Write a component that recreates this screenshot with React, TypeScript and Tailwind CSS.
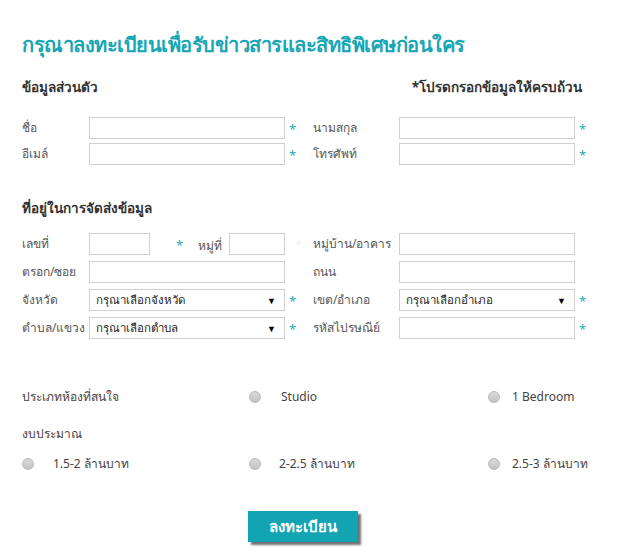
import React from 'react';

const Star = ({ hidden = false }: { hidden?: boolean }) => (
  <span className={`text-[13px] leading-none ${hidden ? 'text-gray-100' : 'text-[#29aab8]'}`}>*</span>
);

const Field = ({ w = 'w-full', select, placeholder }: { w?: string; select?: boolean; placeholder?: string }) => (
  <div className={`${w} h-[22px] border border-[#cfcfcf] bg-white flex items-center px-1.5 text-[11.5px] leading-none text-[#222]`}>
    {select && (
      <>
        <span className="flex-1 whitespace-nowrap">{placeholder}</span>
        <span className="text-[9px] text-black mr-0.5">▼</span>
      </>
    )}
  </div>
);

const Radio = () => (
  <span className="inline-block w-[12px] h-[12px] rounded-full border border-[#b9b9b9] bg-gradient-to-b from-[#d9d9d9] to-[#c4c4c4]" />
);

const Label = ({ children }: { children: React.ReactNode }) => (
  <span className="text-[12px] leading-none whitespace-nowrap text-[#555]">{children}</span>
);

const App: React.FC = () => {
  return (
    <div className="w-[624px] h-[558px] bg-white font-['Noto_Sans','Liberation_Sans',sans-serif] px-[22px] pt-[30px]">
      <h1 className="text-[20px] font-bold text-[#17a6b5] leading-[30px] tracking-tight whitespace-nowrap">
        กรุณาลงทะเบียนเพื่อรับข่าวสารและสิทธิพิเศษก่อนใคร
      </h1>

      <div className="mt-[18px] flex justify-between items-center w-[560px] leading-[18px]">
        <span className="text-[13.5px] font-bold text-[#333]">ข้อมูลส่วนตัว</span>
        <span className="text-[13.5px] font-bold text-[#333]">*โปรดกรอกข้อมูลให้ครบถ้วน</span>
      </div>

      <div className="mt-[21px] grid grid-cols-[67px_196px_28px_86px_176px_20px] auto-rows-[22px] gap-y-[4px] items-center">
        <Label>ชื่อ</Label>
        <Field />
        <span className="pl-[4px]"><Star /></span>
        <Label>นามสกุล</Label>
        <Field />
        <span className="pl-[4px]"><Star /></span>

        <Label>อีเมล์</Label>
        <Field />
        <span className="pl-[4px]"><Star /></span>
        <Label>โทรศัพท์</Label>
        <Field />
        <span className="pl-[4px]"><Star /></span>
      </div>

      <h2 className="mt-[34px] text-[13.5px] leading-[18px] font-bold text-[#333]">ที่อยู่ในการจัดส่งข้อมูล</h2>

      <div className="mt-[16px] grid grid-cols-[67px_196px_28px_86px_176px_20px] auto-rows-[22px] gap-y-[6px] items-center">
        <Label>เลขที่</Label>
        <div className="flex items-center">
          <Field w="w-[61px]" />
          <span className="ml-[26px]"><Star /></span>
          <span className="ml-[15px] mr-[7px]"><Label>หมู่ที่</Label></span>
          <Field w="w-[56px]" />
        </div>
        <span className="pl-[10px]"><Star hidden /></span>
        <Label>หมู่บ้าน/อาคาร</Label>
        <Field />
        <span />

        <Label>ตรอก/ซอย</Label>
        <Field />
        <span />
        <Label>ถนน</Label>
        <Field />
        <span />

        <Label>จังหวัด</Label>
        <Field select placeholder="กรุณาเลือกจังหวัด" />
        <span className="pl-[4px]"><Star /></span>
        <Label>เขต/อำเภอ</Label>
        <Field select placeholder="กรุณาเลือกอำเภอ" />
        <span className="pl-[4px]"><Star /></span>

        <Label>ตำบล/แขวง</Label>
        <Field select placeholder="กรุณาเลือกตำบล" />
        <span className="pl-[4px]"><Star /></span>
        <Label>รหัสไปรษณีย์</Label>
        <Field />
        <span className="pl-[4px]"><Star /></span>
      </div>

      <div className="mt-[50px] grid grid-cols-[227px_239px_1fr] items-center leading-[16px]">
        <span className="text-[12px] text-[#444]">ประเภทห้องที่สนใจ</span>
        <div className="flex items-center">
          <Radio />
          <span className="ml-[20px] text-[12px] text-[#444]">Studio</span>
        </div>
        <div className="flex items-center">
          <Radio />
          <span className="ml-[12px] text-[12px] text-[#444]">1 Bedroom</span>
        </div>
      </div>

      <div className="mt-[21px] text-[12px] leading-[16px] text-[#444]">งบประมาณ</div>

      <div className="mt-[14px] grid grid-cols-[227px_239px_1fr] items-center leading-[16px]">
        <div className="flex items-center">
          <Radio />
          <span className="ml-[19px] text-[12px] text-[#444]">1.5-2 ล้านบาท</span>
        </div>
        <div className="flex items-center">
          <Radio />
          <span className="ml-[18px] text-[12px] text-[#444]">2-2.5 ล้านบาท</span>
        </div>
        <div className="flex items-center">
          <Radio />
          <span className="ml-[12px] text-[12px] text-[#444]">2.5-3 ล้านบาท</span>
        </div>
      </div>

      <div className="mt-[39px] flex justify-center pr-[18px]">
        <button className="w-[110px] h-[31px] bg-[#12a4b3] text-white font-bold text-[15px] leading-none shadow-[3px_3px_2px_rgba(0,0,0,0.55)]">
          ลงทะเบียน
        </button>
      </div>
    </div>
  );
};

export default App;
